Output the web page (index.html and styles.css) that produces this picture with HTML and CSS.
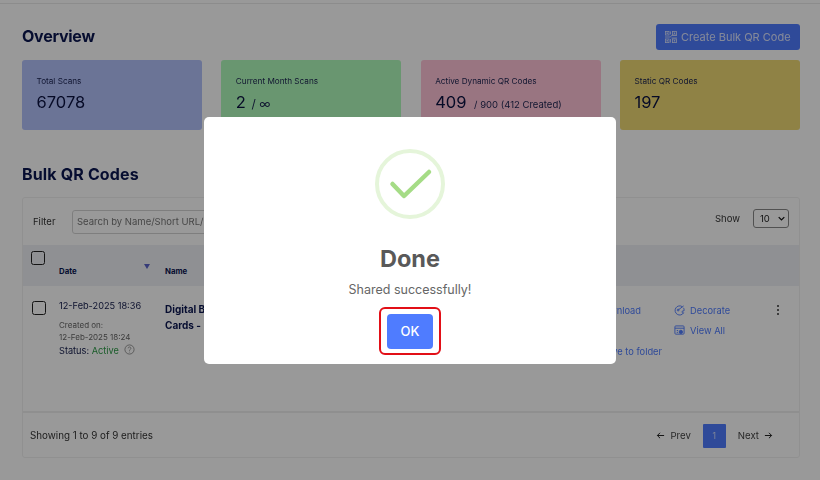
FILE: index.html
```html
<!DOCTYPE html>
<html lang="en">
<head>
<meta charset="utf-8">
<title>Bulk QR Codes</title>
<link rel="stylesheet" href="styles.css">
</head>
<body>
<main class="page">
  <div class="topline"></div>
  <header class="head">
    <h1 class="title first">Overview</h1>
    <a class="create">
      <svg class="qr" viewBox="0 0 12 12" fill="none" stroke="currentColor" stroke-width=".8"><rect x=".4" y=".4" width="3.600" height="3.600"/><rect x="7.500" y=".4" width="4" height="3.600"/><rect x=".4" y="8" width="3.600" height="3.600"/><rect x="7.500" y="8" width="4" height="3.600"/><path d="M0 6h5.500l1-1.500H12M5.500 .4v3M5.500 8v3.600M6.500 7h5.500"/><rect x="1.500" y="1.500" width="1.400" height="1.400" fill="currentColor" stroke="none"/><rect x="8.800" y="1.500" width="1.400" height="1.400" fill="currentColor" stroke="none"/><rect x="1.500" y="9.100" width="1.400" height="1.400" fill="currentColor" stroke="none"/><rect x="8.800" y="9.100" width="1.400" height="1.400" fill="currentColor" stroke="none"/></svg>
      Create Bulk QR Code
    </a>
  </header>
  <section class="stats">
    <div class="stat blue"><p class="label">Total Scans</p><p class="value">67078</p></div>
    <div class="stat green"><p class="label">Current Month Scans</p><p class="value">2 <small class="inf">/ ∞</small></p></div>
    <div class="stat pink"><p class="label">Active Dynamic QR Codes</p><p class="value">409 <small>/ 900 (412 Created)</small></p></div>
    <div class="stat yellow"><p class="label">Static QR Codes</p><p class="value">197</p></div>
  </section>
  <h2 class="title second">Bulk QR Codes</h2>
  <section class="panel">
    <div class="filters">
      <span class="flabel">Filter</span>
      <span class="search">Search by Name/Short URL/Long URL</span>
      <span class="show">Show</span>
      <span class="select">10
        <svg viewBox="0 0 10 6" class="chev"><path d="M1 1l4 4 4-4" fill="none" stroke="currentColor" stroke-width="1.800"/></svg>
      </span>
    </div>
    <div class="thead">
      <span class="box headbox"></span>
      <span class="th date">Date<i class="sort"></i></span>
      <span class="th">Name</span>
    </div>
    <div class="row">
      <span class="box"></span>
      <div class="datecol">
        <p class="when">12-Feb-2025 18:36</p>
        <p class="created">Created on:<br>12-Feb-2025 18:24</p>
        <p class="status">Status: <em>Active</em>
          <svg class="help" viewBox="0 0 12 12"><circle cx="6" cy="6" r="5" fill="none" stroke="currentColor" stroke-width=".8"/><path d="M4.500 4.700a1.500 1.500 0 1 1 2.300 1.300c-.6.400-.8.600-.8 1.300" fill="none" stroke="currentColor" stroke-width=".8"/><circle cx="6" cy="8.800" r=".5" fill="currentColor"/></svg>
        </p>
      </div>
      <p class="name">Digital Business<br>Cards -</p>
      <div class="linkcol first-links">
        <a class="link">Download</a>
        <a class="link">Move to folder</a>
      </div>
      <div class="linkcol second-links">
        <a class="link"><svg class="ic" viewBox="0 0 12 12" fill="none" stroke="currentColor" stroke-width="1"><path d="M9 1.800A5 5 0 1 0 10.500 8.500C9 9 8.300 7.800 8.800 7c.4-.7 1.500-.6 2-.5.500-1.500 0-2.700-.6-3.500"/><path d="M4.500 5.500L10.500 1"/><circle cx="4.500" cy="5.500" r="1"/></svg>Decorate</a>
        <a class="link"><svg class="ic" viewBox="0 0 12 12" fill="none" stroke="currentColor" stroke-width="1"><rect x="1" y="1" width="10" height="9" rx="1"/><path d="M1 3.500h10"/><circle cx="7.500" cy="7.500" r="1.800" fill="currentColor"/><path d="M3 6h1.500M3 8h1.500"/></svg>View All</a>
      </div>
      <span class="kebab"><i></i><i></i><i></i></span>
    </div>
    <footer class="foot">
      <span class="entries">Showing 1 to 9 of 9 entries</span>
      <nav class="pager">
        <span class="pg"><svg class="arrow" viewBox="0 0 10 10"><path d="M9 5H1.500M4.500 2L1.500 5l3 3" fill="none" stroke="currentColor" stroke-width="1.100"/></svg>Prev</span>
        <span class="num">1</span>
        <span class="pg">Next<svg class="arrow" viewBox="0 0 10 10"><path d="M1 5h7.500M5.500 2l3 3-3 3" fill="none" stroke="currentColor" stroke-width="1.100"/></svg></span>
      </nav>
    </footer>
  </section>
</main>
<div class="overlay">
  <div class="modal">
    <div class="success">
      <svg viewBox="0 0 70 70" class="tick"><circle cx="35" cy="35" r="33" fill="none" stroke="#e5f5da" stroke-width="4"/><path d="M17.500 35L29 47 54 23" fill="none" stroke="#a5dc86" stroke-width="4.500" stroke-linecap="round" stroke-linejoin="round"/></svg>
    </div>
    <h2 class="done">Done</h2>
    <p class="msg">Shared successfully!</p>
    <div class="focus"><button class="ok">OK</button></div>
  </div>
</div>
</body>
</html>
```
FILE: styles.css
```css
* { box-sizing: border-box; }
html, body { margin: 0; height: 100%; overflow: hidden; }
body { font-family: "Inter", "Liberation Sans", sans-serif; background: #fff; color: #0d1440; }
p, h1, h2 { margin: 0; }
.page { width: 820px; height: 480px; padding: 0 20px 0 22px; filter: blur(.45px); display: flex; flex-direction: column; }
.topline { height: 4px; border-bottom: 1px solid #e9e9e9; margin: 0 -20px 0 -22px; }
.head { display: flex; justify-content: space-between; align-items: center; height: 26px; margin-top: 20px; }
.title { font-size: 16px; line-height: 26px; font-weight: 700; color: #0b1650; }
.first { letter-spacing: -.25px; position: relative; top: -1px; }
.create { display: flex; align-items: center; gap: 4px; width: 144px; height: 26px; padding-left: 9px; background: #4f7cff; border-radius: 3px; color: #dde4ff; font-size: 11px; white-space: nowrap; }
.qr { width: 12px; height: 12px; }
.stats { display: grid; grid-template-columns: 180px 180px 180px 180px; justify-content: space-between; margin-top: 10px; }
.stat { height: 70px; border-radius: 3px; padding: 15px 14.500px 0; }
.blue { background: #b2c1fb; }
.green { background: #b0fbbb; }
.pink { background: #ffc4d7; }
.yellow { background: #eed974; }
.label { font-size: 8.200px; line-height: 12px; color: #1b2350; }
.value { font-size: 16.500px; line-height: 22px; margin-top: 4px; color: #0b1240; white-space: nowrap; }
.value small { font-size: 9.500px; margin-left: 3px; color: #1b2350; }
.value .inf { font-size: 12px; margin-left: 1px; }
.second { margin-top: 31px; letter-spacing: .15px; }
.panel { margin-top: 10px; height: 261px; border: 1px solid #f0f0f0; border-radius: 3px; display: flex; flex-direction: column; }
.filters { height: 47px; display: flex; align-items: center; padding: 0 10px; font-size: 9.500px; flex: none; }
.flabel { color: #333; width: 39px; }
.search { flex: none; width: 200px; height: 24px; line-height: 22px; padding-left: 4px; border: 1px solid #d3d3d3; border-radius: 3px; color: #777; white-space: nowrap; overflow: hidden; }
.show { margin-left: auto; color: #333; margin-right: 13px; position: relative; top: -3px; }
.select { display: flex; align-items: center; justify-content: space-between; width: 36px; height: 19px; padding: 0 3px 0 6px; border: 1px solid #888; border-radius: 3px; color: #222; position: relative; top: -3px; }
.chev { width: 7px; height: 5px; color: #111; }
.thead { flex: none; height: 41px; background: #eef0f6; position: relative; display: flex; align-items: flex-end; padding: 0 0 10px 36px; }
.th { font-size: 7.800px; font-weight: 700; color: #0b1650; line-height: 10px; }
.date { width: 106px; position: relative; }
.sort { position: absolute; right: 15px; top: -2px; border: 3px solid transparent; border-top: 5px solid #5a63c9; border-bottom: 0; }
.box { display: block; width: 14px; height: 14px; border: 1.500px solid #222; border-radius: 2.500px; flex: none; background: #fff; }
.headbox { position: absolute; left: 8px; top: 6px; background: transparent; }
.row { height: 127px; flex: none; display: flex; padding: 15px 0 0 9px; border-bottom: 2px solid #eee; position: relative; }
.datecol { width: 106px; margin-left: 13px; flex: none; }
.when { font-size: 9.200px; line-height: 12px; color: #141c4c; margin-top: -1px; white-space: nowrap; }
.created { font-size: 8px; line-height: 12px; color: #666; margin-top: 7px; white-space: nowrap; }
.status { font-size: 9.200px; line-height: 14px; color: #141c4c; margin-top: 1px; white-space: nowrap; }
.status em { font-style: normal; color: #2f9c49; }
.help { width: 11px; height: 11px; color: #777; margin-left: 3px; vertical-align: -1px; }
.name { font-size: 10px; line-height: 16px; font-weight: 700; color: #0b1650; white-space: nowrap; }
.linkcol { display: flex; flex-direction: column; position: absolute; font-size: 9.300px; color: #4f7cff; top: 14px; }
.linkcol .link { display: flex; align-items: center; gap: 5px; height: 20.500px; white-space: nowrap; }
.first-links { right: 137px; align-items: flex-end; }
.first-links .link:first-child { margin-right: 21px; }
.first-links .link:nth-child(2) { margin-top: 20.500px; }
.second-links { left: 651px; }
.ic { width: 11px; height: 11px; }
.kebab { position: absolute; left: 753.500px; top: 19px; display: flex; flex-direction: column; gap: 2px; }
.kebab i { display: block; width: 2px; height: 2px; border-radius: 50%; background: #333; }
.foot { flex: 1; display: flex; align-items: center; justify-content: space-between; padding: 0 26px 0 7px; }
.entries { font-size: 9.800px; color: #333; }
.pager { display: flex; align-items: center; gap: 12px; font-size: 9.600px; color: #444; }
.pg { display: flex; align-items: center; gap: 5px; }
.arrow { width: 9px; height: 9px; color: #222; }
.num { width: 23px; height: 24px; margin-top: 2px; background: #4f7cff; border-radius: 1px; color: #cfdcff; display: flex; align-items: center; justify-content: center; font-size: 8.500px; }
.overlay { position: fixed; inset: 0; background: rgba(0,0,0,.4); display: flex; align-items: flex-start; justify-content: center; padding-top: 117px; }
.modal { width: 412px; height: 247px; background: #fff; border-radius: 5px; display: flex; flex-direction: column; align-items: center; padding-top: 32px; }
.success { width: 70px; height: 70px; }
.tick { width: 70px; height: 70px; display: block; }
.done { font-size: 23.500px; line-height: 30px; font-weight: 700; color: #595959; margin-top: 25px; }
.msg { font-size: 12.500px; line-height: 16px; color: #666; margin-top: 8px; }
.focus { margin-top: 9px; width: 62px; height: 48px; border: 2px solid #e20f17; border-radius: 6px; display: flex; align-items: center; justify-content: center; }
.ok { width: 46px; height: 35px; border: 0; border-radius: 4px; background: #4f7cff; color: #fff; font: 500 13px "Inter", "Liberation Sans", sans-serif; padding: 0; }
```
